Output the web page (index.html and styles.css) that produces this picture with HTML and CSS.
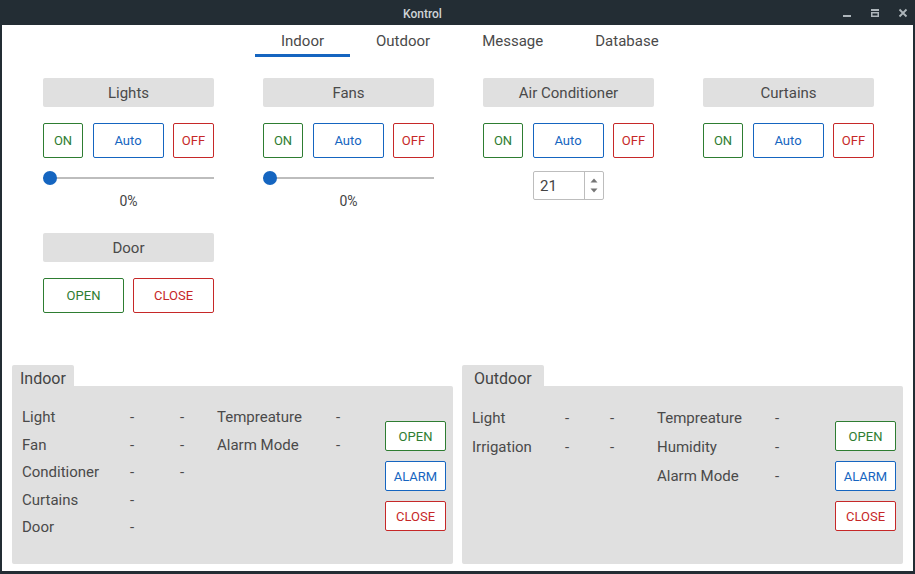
FILE: index.html
```html
<!DOCTYPE html>
<html>
<head>
<meta charset="utf-8">
<link rel="stylesheet" href="styles.css">
</head>
<body>
<div class="window">
  <div class="titlebar">
    <span class="title">Kontrol</span>
    <div class="wm-buttons">
      <svg width="10" height="10" viewBox="0 0 10 10"><rect x="1" y="7" width="8" height="2" fill="#aeb6bb"/></svg>
      <svg width="10" height="10" viewBox="0 0 10 10"><rect x="1" y="1" width="8" height="2" fill="#aeb6bb"/><rect x="1.75" y="4.75" width="6.5" height="3.5" fill="none" stroke="#aeb6bb" stroke-width="1.5"/></svg>
      <svg width="10" height="10" viewBox="0 0 10 10"><path d="M1.5 1.5L8.5 8.5M8.5 1.5L1.5 8.5" stroke="#aeb6bb" stroke-width="1.8"/></svg>
    </div>
  </div>
  <div class="content">
    <div class="tabs">
      <div class="tab active">Indoor</div>
      <div class="tab">Outdoor</div>
      <div class="tab">Message</div>
      <div class="tab">Database</div>
    </div>

    <div class="cards">
      <div class="card">
        <div class="card-head">Lights</div>
        <div class="btn-row">
          <button class="btn green w-on">ON</button>
          <button class="btn blue w-auto">Auto</button>
          <button class="btn red w-off">OFF</button>
        </div>
        <div class="slider"><span class="thumb"></span></div>
        <div class="value">0%</div>
      </div>
      <div class="card">
        <div class="card-head">Fans</div>
        <div class="btn-row">
          <button class="btn green w-on">ON</button>
          <button class="btn blue w-auto">Auto</button>
          <button class="btn red w-off">OFF</button>
        </div>
        <div class="slider"><span class="thumb"></span></div>
        <div class="value">0%</div>
      </div>
      <div class="card">
        <div class="card-head">Air Conditioner</div>
        <div class="btn-row">
          <button class="btn green w-on">ON</button>
          <button class="btn blue w-auto">Auto</button>
          <button class="btn red w-off">OFF</button>
        </div>
        <div class="spin">
          <span class="spin-val">21</span>
          <span class="spin-arrows">
            <svg width="8" height="5" viewBox="0 0 8 5"><path d="M4 0.5L7.5 4.5H0.5Z" fill="#757575"/></svg>
            <svg width="8" height="5" viewBox="0 0 8 5"><path d="M4 4.5L7.5 0.5H0.5Z" fill="#757575"/></svg>
          </span>
        </div>
      </div>
      <div class="card">
        <div class="card-head">Curtains</div>
        <div class="btn-row">
          <button class="btn green w-on">ON</button>
          <button class="btn blue w-auto">Auto</button>
          <button class="btn red w-off">OFF</button>
        </div>
      </div>
      <div class="card">
        <div class="card-head">Door</div>
        <div class="btn-row">
          <button class="btn green w-door">OPEN</button>
          <button class="btn red w-door">CLOSE</button>
        </div>
      </div>
    </div>

    <div class="groups">
      <div class="group">
        <div class="group-tab">Indoor</div>
        <div class="group-body">
          <div class="grid grid-in-left">
            <span>Light</span><span>-</span><span>-</span>
            <span>Fan</span><span>-</span><span>-</span>
            <span>Conditioner</span><span>-</span><span>-</span>
            <span>Curtains</span><span>-</span><span></span>
            <span>Door</span><span>-</span><span></span>
          </div>
          <div class="grid grid-in-right">
            <span>Tempreature</span><span>-</span>
            <span>Alarm Mode</span><span>-</span>
          </div>
          <div class="actions">
            <button class="btn green sm">OPEN</button>
            <button class="btn blue sm">ALARM</button>
            <button class="btn red sm">CLOSE</button>
          </div>
        </div>
      </div>
      <div class="group">
        <div class="group-tab wide">Outdoor</div>
        <div class="group-body">
          <div class="grid grid-out-left">
            <span>Light</span><span>-</span><span>-</span>
            <span>Irrigation</span><span>-</span><span>-</span>
          </div>
          <div class="grid grid-out-right">
            <span>Tempreature</span><span>-</span>
            <span>Humidity</span><span>-</span>
            <span>Alarm Mode</span><span>-</span>
          </div>
          <div class="actions">
            <button class="btn green sm">OPEN</button>
            <button class="btn blue sm">ALARM</button>
            <button class="btn red sm">CLOSE</button>
          </div>
        </div>
      </div>
    </div>
  </div>
</div>
</body>
</html>
```
FILE: styles.css
```css
* { box-sizing: border-box; }
html, body { margin: 0; padding: 0; }
body {
  width: 915px;
  height: 574px;
  overflow: hidden;
  font-family: Roboto, "Liberation Sans", sans-serif;
  color: #444;
}
.window {
  width: 915px;
  height: 574px;
  background: #232d34;
  display: flex;
  flex-direction: column;
  padding: 0 2px 3px 2px;
}
.titlebar {
  height: 25px;
  flex: none;
  position: relative;
  display: flex;
  align-items: center;
  justify-content: center;
  padding-right: 70px;
}
.title {
  color: #cfd4d7;
  font-size: 12px;
  font-weight: 500;
  padding-top: 2px;
}
.wm-buttons {
  position: absolute;
  right: 5px;
  top: 8px;
  display: flex;
  gap: 18px;
}
.wm-buttons svg { display: block; }
.content {
  flex: 1;
  background: #fff;
  display: flex;
  flex-direction: column;
}
.tabs {
  display: flex;
  height: 32px;
  padding-left: 253px;
}
.tab {
  font-size: 15px;
  color: #4a4a4a;
  padding: 1px 26px 0;
  height: 32px;
  line-height: 31px;
  border-bottom: 3px solid transparent;
}
.tab.active { border-bottom-color: #1565c0; }

.cards {
  margin-top: 21px;
  padding-left: 41px;
  display: grid;
  grid-template-columns: repeat(4, 171px);
  column-gap: 49px;
  row-gap: 24px;
  align-items: start;
}
.card-head {
  height: 29px;
  background: #e0e0e0;
  border-radius: 2px;
  font-size: 15px;
  color: #4a4a4a;
  text-align: center;
  line-height: 31px;
}
.btn-row {
  margin-top: 16px;
  display: flex;
  justify-content: space-between;
}
.btn {
  font-family: Roboto, "Liberation Sans", sans-serif;
  font-size: 13px;
  background: #fff;
  border: 1px solid;
  border-radius: 2px;
  height: 35px;
  padding: 0;
  margin: 0;
}
.green { color: #2e7d32; border-color: #2e7d32; }
.blue { color: #1565c0; border-color: #1565c0; }
.red { color: #c62828; border-color: #c62828; }
.w-on { width: 40px; }
.w-auto { width: 71px; }
.w-off { width: 41px; }
.w-door { width: 81px; }

.slider {
  margin-top: 13px;
  height: 14px;
  position: relative;
}
.slider::before {
  content: "";
  position: absolute;
  left: 0;
  right: 0;
  top: 6px;
  height: 2px;
  background: #bdbdbd;
}
.thumb {
  position: absolute;
  left: 0;
  top: 0;
  width: 14px;
  height: 14px;
  border-radius: 50%;
  background: #1565c0;
}
.value {
  margin-top: 8px;
  font-size: 14px;
  line-height: 16px;
  text-align: center;
  color: #444;
}
.spin {
  margin: 13px auto 0;
  width: 71px;
  height: 29px;
  border: 1px solid #bdbdbd;
  border-radius: 2px;
  display: flex;
}
.spin-val {
  flex: 1;
  font-size: 15px;
  line-height: 29px;
  padding-left: 6px;
  color: #444;
}
.spin-arrows {
  width: 19px;
  border-left: 1px solid #bdbdbd;
  display: flex;
  flex-direction: column;
  align-items: center;
  justify-content: center;
  gap: 5px;
}
.spin-arrows svg { display: block; }

.groups {
  margin-top: auto;
  padding: 0 10px 7px 10px;
  display: flex;
  gap: 9px;
}
.group {
  width: 441px;
  display: flex;
  flex-direction: column;
}
.group-tab {
  align-self: flex-start;
  height: 21px;
  background: #e0e0e0;
  border-radius: 2px 2px 0 0;
  font-size: 16px;
  line-height: 22px;
  padding: 3px 8px 0;
  color: #444;
  overflow: visible;
}
.group-tab.wide { padding: 3px 12px 0; }
.group-body {
  height: 178px;
  background: #e0e0e0;
  border-radius: 0 2px 2px 2px;
  display: flex;
  padding: 18px 7px 0 10px;
  font-size: 15px;
  color: #4a4a4a;
}
.grid {
  display: grid;
  align-content: start;
}
.grid span { line-height: 27.5px; height: 27.5px; }
.grid-in-left { grid-template-columns: 108px 50px 37px; }
.grid-in-right { grid-template-columns: 119px 20px; }
.grid-out-left { grid-template-columns: 93px 45px 47px; }
.grid-out-left span, .grid-out-right span { height: 29px; line-height: 29px; }
.grid-out-right { grid-template-columns: 118px 20px; }
.actions {
  margin-left: auto;
  display: flex;
  flex-direction: column;
  gap: 10px;
  padding-top: 17px;
}
.btn.sm { width: 61px; height: 30px; font-size: 13px; }
```
